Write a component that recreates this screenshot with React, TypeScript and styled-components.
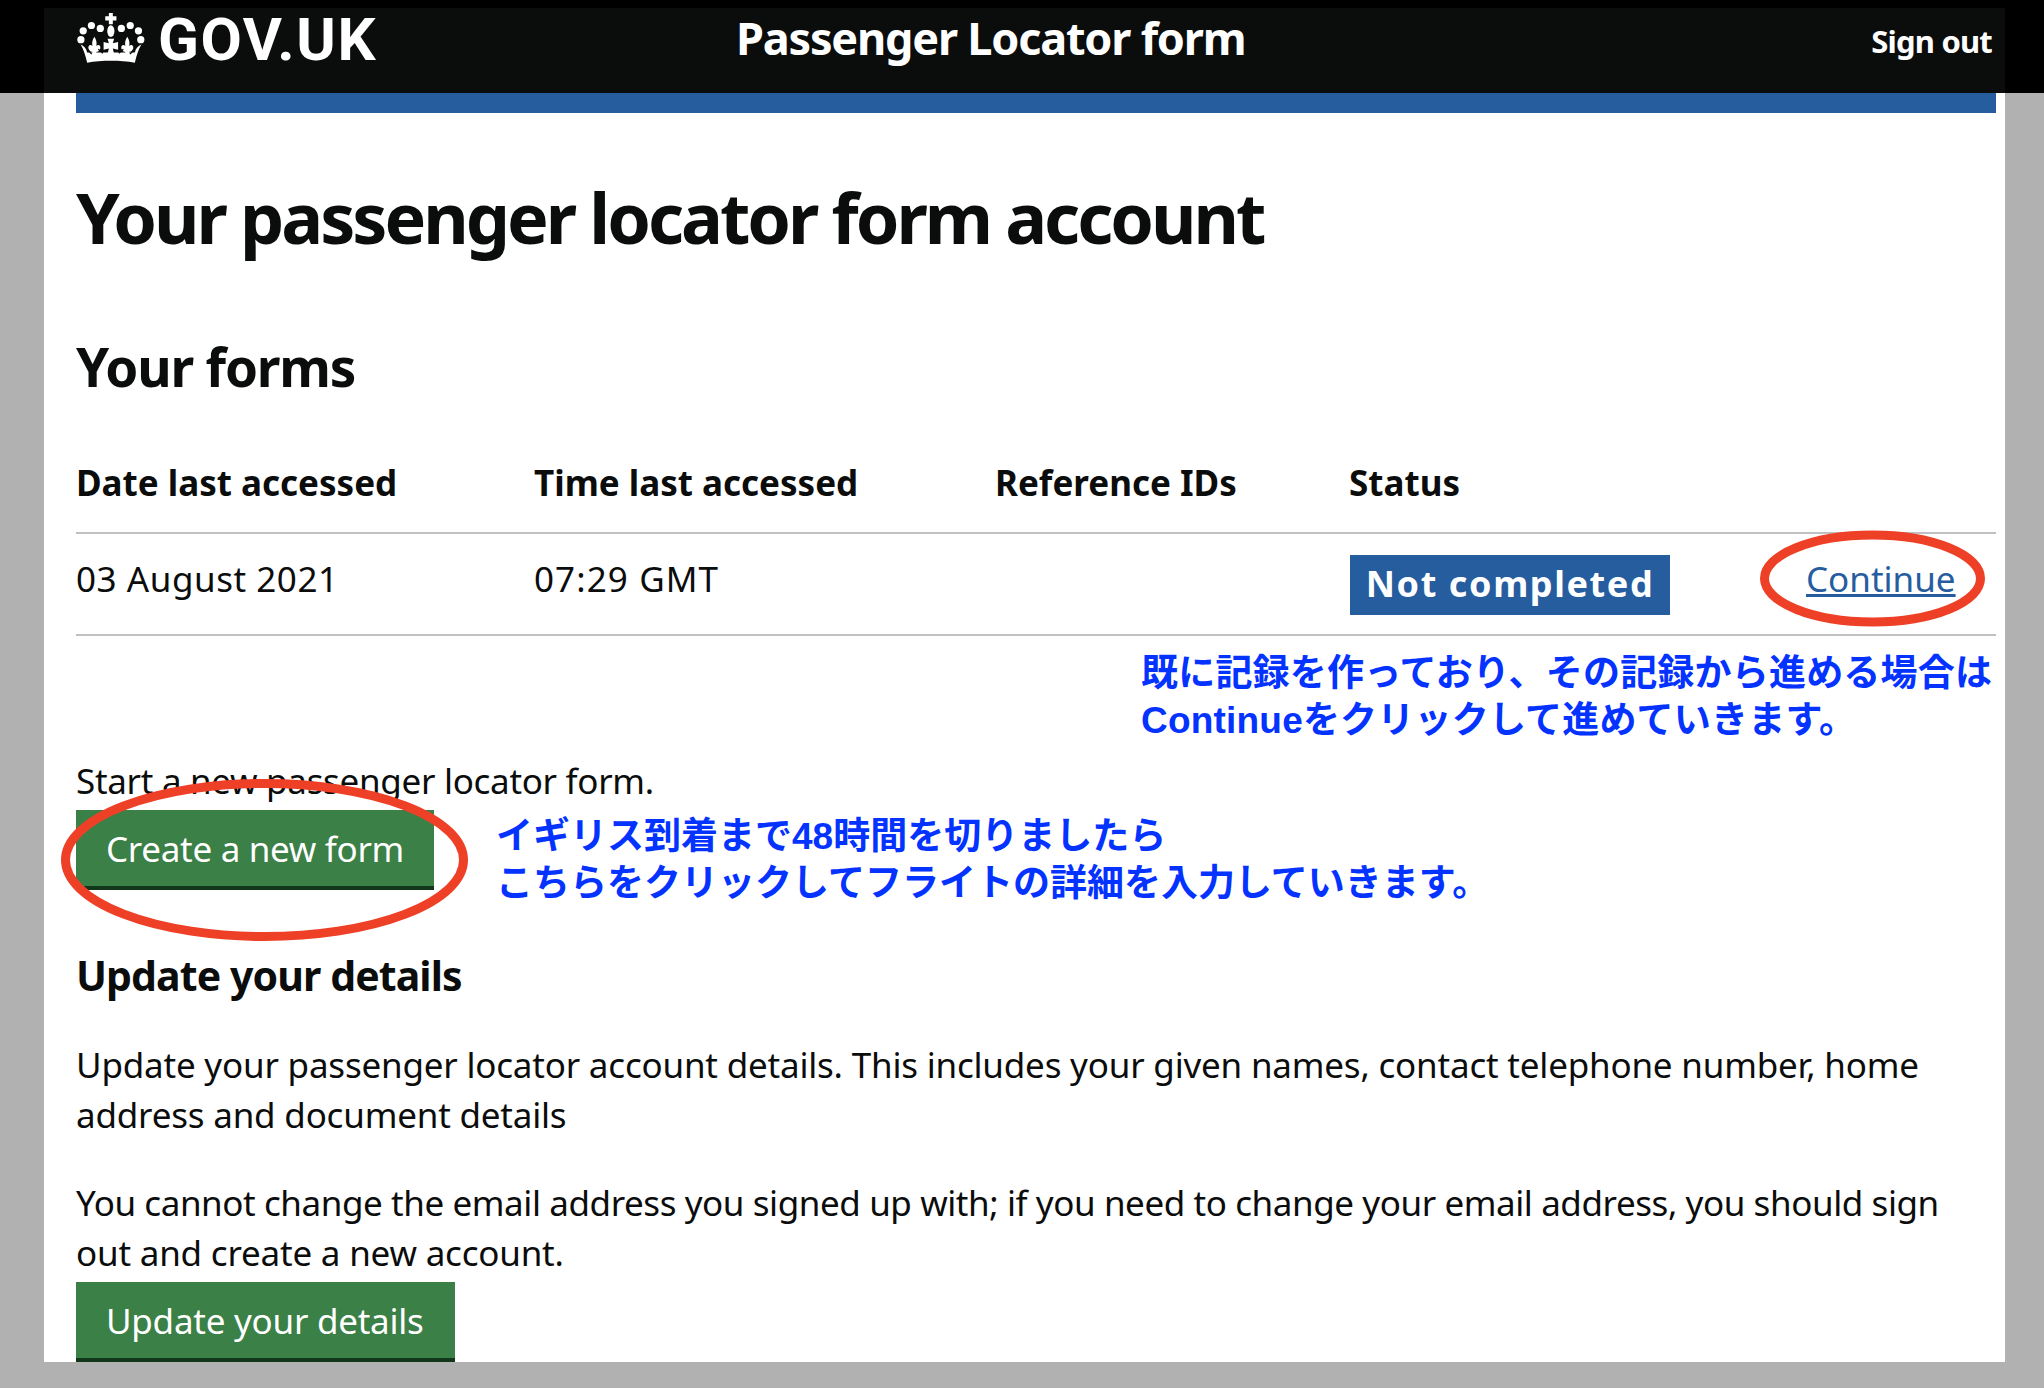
import React from "react";
import styled, { createGlobalStyle } from "styled-components";

const GlobalStyle = createGlobalStyle`
  html, body {
    margin: 0;
    padding: 0;
    background: #b1b1b1;
  }
  body {
    font-family: "Noto Sans", "Liberation Sans", sans-serif;
    color: #0b0c0c;
  }
`;

const Page = styled.div`
  width: 2044px;
  height: 1388px;
  overflow: hidden;
  background: #b1b1b1;
`;

const TopBar = styled.header`
  height: 85px;
  border-top: 8px solid #000;
  background: linear-gradient(to right, #000 44px, #0b0c0c 44px, #0b0c0c 2005px, #000 2005px);
  display: grid;
  grid-template-columns: 659px 1fr 200px;
  align-items: start;
  padding-left: 77px;
  padding-right: 52px;
  color: #fff;
`;

const Brand = styled.div`
  display: flex;
  align-items: flex-start;
  gap: 13px;
  font-family: Roboto, "Noto Sans", sans-serif;
  font-size: 60px;
  font-weight: 700;
  letter-spacing: 1.6px;
  line-height: 1;
  svg {
    margin-top: 5px;
  }
`;

const BrandName = styled.span`
  margin-top: 2px;
`;

const ServiceName = styled.div`
  margin-top: -1px;
  font-size: 45px;
  font-weight: 700;
  letter-spacing: -1.2px;
`;

const SignOut = styled.div`
  margin-top: 12px;
  font-size: 31px;
  font-weight: 700;
  letter-spacing: -0.8px;
  text-align: right;
`;

const Panel = styled.main`
  width: 1961px;
  height: 1269px;
  margin-left: 44px;
  box-sizing: border-box;
  padding: 0 9px 0 32px;
  background: #fff;
  overflow: hidden;
`;

const BlueBar = styled.div`
  height: 20px;
  background: #265d9f;
`;

const PageTitle = styled.h1`
  margin: 58px 0 0;
  font-size: 70px;
  line-height: 92px;
  font-weight: 700;
  letter-spacing: -3px;
`;

const SectionTitle = styled.h2`
  margin: 69px 0 0;
  font-size: 53px;
  line-height: 70px;
  font-weight: 700;
  letter-spacing: -1.2px;
`;

const Table = styled.div`
  margin-top: 30px;
`;

const HeadRow = styled.div`
  display: grid;
  grid-template-columns: 458px 461px 354px 457px 1fr;
  align-items: center;
  height: 100px;
  border-bottom: 2px solid #bfc1c3;
  font-size: 35px;
  font-weight: 700;
`;

const BodyRow = styled(HeadRow)`
  box-sizing: content-box;
  height: 88px;
  padding-bottom: 12px;
  font-weight: 400;
  letter-spacing: 0.55px;
`;

const TimeCell = styled.div`
  letter-spacing: 1.1px;
`;

const Badge = styled.span`
  display: inline-block;
  width: 320px;
  height: 60px;
  box-sizing: border-box;
  margin: 14px 0 0 1px;
  background: #265d9f;
  color: #fff;
  font-size: 36px;
  font-weight: 700;
  line-height: 58px;
  text-align: center;
  letter-spacing: 1.6px;
  white-space: nowrap;
`;

const LinkCell = styled.div`
  position: relative;
  letter-spacing: 0;
`;

const ContinueLink = styled.a`
  color: #265d9f;
  text-decoration: underline;
  font-size: 35px;
`;

const Ring = styled.svg`
  position: absolute;
  pointer-events: none;
  overflow: visible;
`;

const ContinueRing = styled(Ring)`
  left: -46px;
  top: -24px;
  width: 225px;
  height: 95px;
`;

const CreateRing = styled(Ring)`
  left: -15px;
  top: -31px;
  width: 407px;
  height: 162px;
`;

const Note = styled.p`
  margin: 0;
  color: #0433ff;
  font-family: "Liberation Sans", "Noto Sans CJK JP", sans-serif;
  font-size: 37px;
  font-weight: 700;
  line-height: 47px;
  white-space: nowrap;
`;

const ContinueNote = styled(Note)`
  margin: 14px 0 0 1065px;
  letter-spacing: 0.2px;
`;

const BodyText = styled.p`
  margin: 0;
  font-size: 35px;
  line-height: 50px;
  letter-spacing: -0.2px;
`;

const TightLine = styled.span`
  letter-spacing: -0.42px;
`;

const StartText = styled(BodyText)`
  margin-top: 12px;
  letter-spacing: -0.3px;
`;

const CreateRow = styled.div`
  position: relative;
  display: flex;
  align-items: flex-start;
  gap: 62px;
  margin-top: 4px;
`;

const CreateNote = styled(Note)`
  margin-top: 3px;
`;

const GreenButton = styled.button`
  height: 80px;
  padding: 0 30px;
  box-sizing: border-box;
  border: 0;
  border-bottom: 4px solid #12361a;
  background: #3b8046;
  color: #fff;
  font-family: inherit;
  font-size: 35px;
  letter-spacing: -0.3px;
  white-space: nowrap;
`;

const SubTitle = styled.h3`
  margin: 38px 0 0;
  font-size: 41px;
  line-height: 60px;
  font-weight: 700;
  letter-spacing: -0.9px;
`;

const DetailText = styled(BodyText)`
  margin-top: 38px;
`;

const FirstDetail = styled(DetailText)`
  margin-top: 35px;
`;

const UpdateButton = styled(GreenButton)`
  display: block;
  margin-top: 4px;
  padding-right: 31px;
  letter-spacing: -0.25px;
`;

const fleur =
  "M52 72C58 82 60 90 58 100C64 94 72 98 70 108C68 116 62 118 58 118L58 125L46 125L46 118C42 118 36 116 34 108C32 98 40 94 46 100C44 90 46 82 52 72Z";

const Crown = () => (
  <svg width="68" height="50" viewBox="0 0 205 152" fill="#fff" aria-hidden="true">
    <path d="M96 0H108V10H119V23H108V34H96V23H85V10H96Z" />
    <ellipse cx="102" cy="55" rx="11" ry="18" />
    <circle cx="18" cy="54" r="11" />
    <circle cx="43" cy="38" r="11" />
    <circle cx="70" cy="47" r="11" />
    <circle cx="134" cy="47" r="11" />
    <circle cx="161" cy="38" r="11" />
    <circle cx="186" cy="54" r="11" />
    <circle cx="11" cy="81" r="11" />
    <circle cx="193" cy="81" r="11" />
    <path d={fleur} />
    <path d={fleur} transform="translate(100 0)" />
    <path d="M92 78H112L108 92L124 88V112L108 108L112 125H92L96 108L80 112V88L96 92Z" />
    <path d="M10 96C20 100 28 108 30 120L175 120C177 108 185 100 195 96C186 110 180 130 175 151C130 143 75 143 30 151C25 130 19 110 10 96Z" />
    <path d="M30 110L44 125M174 110L160 125M78 122L64 110M126 122L140 110" stroke="#0b0c0c" strokeWidth="4" fill="none" />
  </svg>
);

const App = () => (
  <Page>
    <GlobalStyle />
    <TopBar>
      <Brand>
        <Crown />
        <BrandName>GOV.UK</BrandName>
      </Brand>
      <ServiceName>Passenger Locator form</ServiceName>
      <SignOut>Sign out</SignOut>
    </TopBar>
    <Panel>
      <BlueBar />
      <PageTitle>Your passenger locator form account</PageTitle>
      <SectionTitle>Your forms</SectionTitle>
      <Table>
        <HeadRow>
          <div>Date last accessed</div>
          <div>Time last accessed</div>
          <div>Reference IDs</div>
          <div>Status</div>
          <div />
        </HeadRow>
        <BodyRow>
          <div>03 August 2021</div>
          <TimeCell>07:29 GMT</TimeCell>
          <div />
          <div>
            <Badge>Not completed</Badge>
          </div>
          <LinkCell>
            <ContinueLink>Continue</ContinueLink>
            <ContinueRing viewBox="0 0 225 95">
              <ellipse cx="112.500" cy="47.500" rx="108" ry="43.500" fill="none" stroke="#ee4027" strokeWidth="9" />
            </ContinueRing>
          </LinkCell>
        </BodyRow>
      </Table>
      <ContinueNote>
        既に記録を作っており、その記録から進める場合は
        <br />
        Continueをクリックして進めていきます。
      </ContinueNote>
      <StartText>Start a new passenger locator form.</StartText>
      <CreateRow>
        <GreenButton>Create a new form</GreenButton>
        <CreateNote>
          イギリス到着まで48時間を切りましたら
          <br />
          こちらをクリックしてフライトの詳細を入力していきます。
        </CreateNote>
        <CreateRing viewBox="0 0 407 162">
          <ellipse cx="203.500" cy="81" rx="199" ry="76.500" fill="none" stroke="#ee4027" strokeWidth="9" />
        </CreateRing>
      </CreateRow>
      <SubTitle>Update your details</SubTitle>
      <FirstDetail>
        Update your passenger locator account details. This includes your given names, contact telephone number, home
        <br />
        address and document details
      </FirstDetail>
      <DetailText>
        <TightLine>
          You cannot change the email address you signed up with; if you need to change your email address, you should sign
        </TightLine>
        <br />
        out and create a new account.
      </DetailText>
      <UpdateButton>Update your details</UpdateButton>
    </Panel>
  </Page>
);

export default App;
